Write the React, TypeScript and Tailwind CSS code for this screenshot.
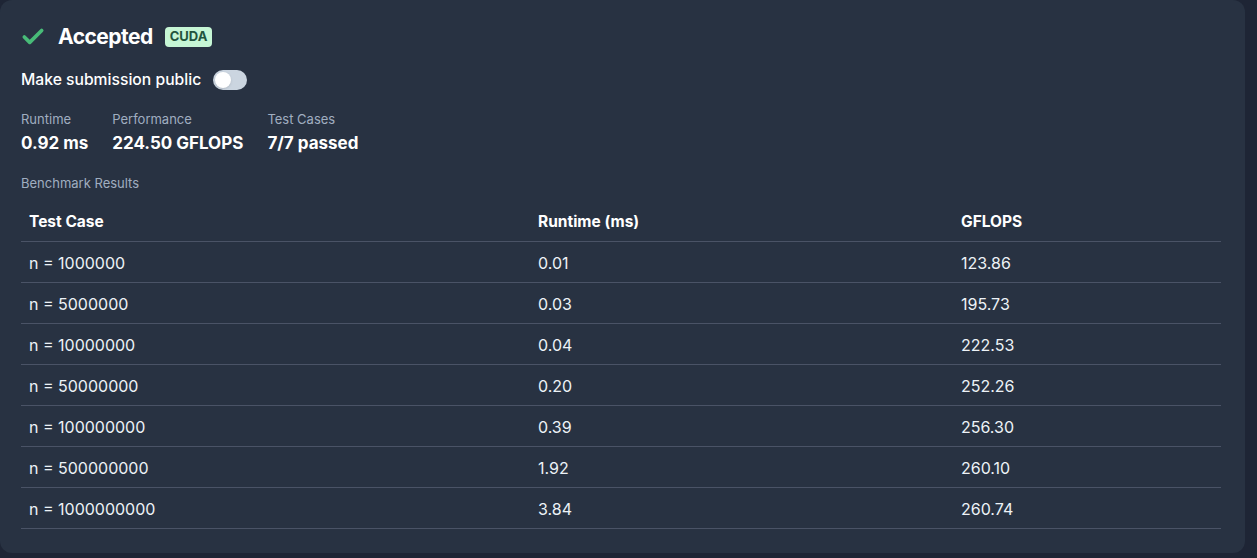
import { Check } from "lucide-react";

const rows = [
  { n: "1000000", runtime: "0.01", gflops: "123.86" },
  { n: "5000000", runtime: "0.03", gflops: "195.73" },
  { n: "10000000", runtime: "0.04", gflops: "222.53" },
  { n: "50000000", runtime: "0.20", gflops: "252.26" },
  { n: "100000000", runtime: "0.39", gflops: "256.30" },
  { n: "500000000", runtime: "1.92", gflops: "260.10" },
  { n: "1000000000", runtime: "3.84", gflops: "260.74" },
];

const stats = [
  { label: "Runtime", value: "0.92 ms" },
  { label: "Performance", value: "224.50 GFLOPS" },
  { label: "Test Cases", value: "7/7 passed" },
];

export default function App() {
  return (
    <div
      className="w-[1257px] h-[558px] bg-[#1e2535] overflow-hidden"
      style={{ fontFamily: "Inter, 'Noto Sans', sans-serif" }}
    >
      <div className="w-[1245px] h-[553px] bg-[#283242] rounded-xl px-[21px] pt-[23px] pb-6">
        {/* Header */}
        <div className="flex items-center h-7">
          <Check className="w-[26px] h-[26px] -ml-[1px] text-[#48bb78]" strokeWidth={3.4} />
          <span className="ml-[12px] text-[21px] font-bold text-white tracking-tight">Accepted</span>
          <span className="ml-3 px-[5px] h-5 flex items-center rounded-sm bg-[#c6f6d5] text-[#22543d] text-[13px] font-bold">
            CUDA
          </span>
        </div>

        {/* Public toggle */}
        <div className="flex items-center h-5 mt-[19px]">
          <span className="text-[15.7px] font-medium text-white">Make submission public</span>
          <button className="ml-3 w-[34px] h-5 rounded-full bg-[#cbd5e0] p-[2px] flex items-center">
            <span className="w-4 h-4 rounded-full bg-white shadow" />
          </button>
        </div>

        {/* Stats */}
        <div className="flex gap-6 mt-5">
          {stats.map((s) => (
            <div key={s.label}>
              <div className="text-[13px] leading-[18px] text-[#a0aec0]">{s.label}</div>
              <div className="mt-[3px] text-[17px] leading-6 font-bold text-white">{s.value}</div>
            </div>
          ))}
        </div>

        <div className="mt-[19px] text-[13px] leading-[18px] text-[#a0aec0]">Benchmark Results</div>

        {/* Table */}
        <table className="mt-[9px] w-[1200px] text-left">
          <thead>
            <tr className="h-10 border-b border-[#4a5366]">
              <th className="w-[509px] px-2 pt-[2px] text-[15.5px] font-bold text-white">Test Case</th>
              <th className="w-[423px] px-2 pt-[2px] text-[15.5px] font-bold text-white">Runtime (ms)</th>
              <th className="px-2 pt-[2px] text-[15.5px] font-bold text-white">GFLOPS</th>
            </tr>
          </thead>
          <tbody>
            {rows.map((r) => (
              <tr key={r.n} className="h-[41px] border-b border-[#4a5366] text-[16px] text-[#edf2f7]">
                <td className="px-2 pt-[3px]">n = {r.n}</td>
                <td className="px-2 pt-[3px]">{r.runtime}</td>
                <td className="px-2 pt-[3px]">{r.gflops}</td>
              </tr>
            ))}
          </tbody>
        </table>
      </div>
    </div>
  );
}
